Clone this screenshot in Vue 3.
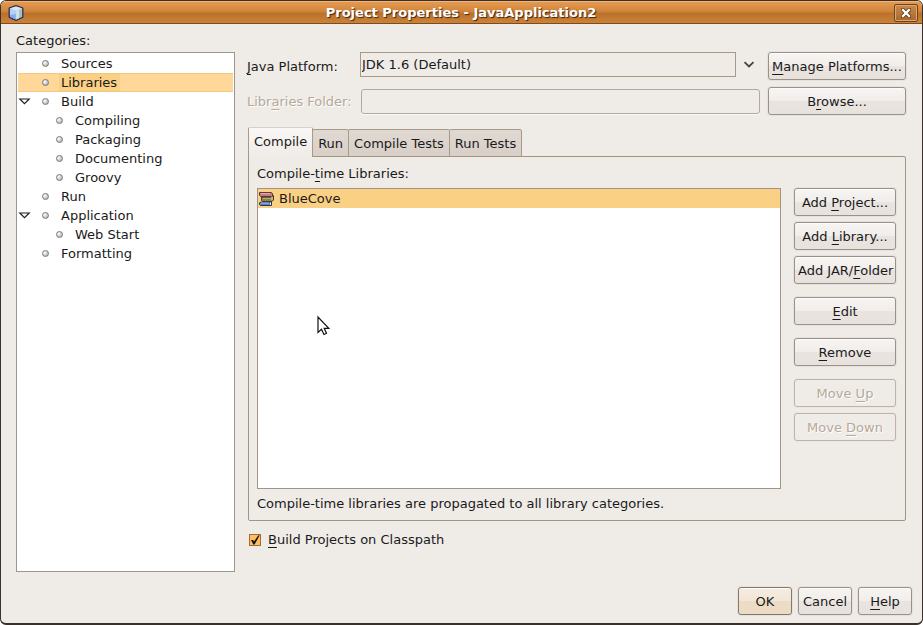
<script setup>
import { h, ref } from 'vue'

// Renders a caption; the letter after "_" is the keyboard mnemonic.
const Caption = ({ text }) => {
  const at = text.indexOf('_')
  if (at < 0) return h('span', text)
  return h('span', [text.slice(0, at), h('u', text[at + 1]), text.slice(at + 2)])
}
Caption.props = ['text']

const categories = [
  { name: 'Sources' },
  { name: 'Libraries', selected: true },
  { name: 'Build', open: true },
  { name: 'Compiling', child: true },
  { name: 'Packaging', child: true },
  { name: 'Documenting', child: true },
  { name: 'Groovy', child: true },
  { name: 'Run' },
  { name: 'Application', open: true },
  { name: 'Web Start', child: true },
  { name: 'Formatting' },
]

const tabs = ['Compile', 'Run', 'Compile Tests', 'Run Tests']
const activeTab = ref('Compile')
const buildOnClasspath = ref(true)

const actions = [
  { text: 'Add _Project...' },
  { text: 'Add _Library...' },
  { text: 'Add JAR/_Folder' },
  { text: '_Edit', gap: true },
  { text: '_Remove', gap: true },
  { text: 'Move _Up', gap: true, disabled: true },
  { text: 'Move _Down', disabled: true },
]
</script>

<template>
  <div class="window">
    <header class="titlebar">
      <svg class="logo" width="16" height="16" viewBox="0 0 16 16">
        <path d="M8 .7 14.800 3V12.200L8 15.300 1.200 12.200V3Z" fill="#c4d6e0" stroke="#26305c" stroke-width="1.300" stroke-linejoin="round" />
        <path d="M2 3.800 7.800 6V14.400L2 11.700Z" fill="#86abe6" />
        <path d="M2 3.800 7.800 6V9L2 10Z" fill="#b4d0f6" />
        <path d="M8.200 6 14 3.800V11.700L8.200 14.400Z" fill="#a9c0c4" />
        <path d="M8.200 6 11 5V13L8.200 14.400Z" fill="#d3e4e8" />
        <path d="M8 1.500 13.800 3.500 8 5.800 2.200 3.500Z" fill="#d9e6f0" />
      </svg>
      <h1>Project Properties - JavaApplication2</h1>
      <button class="close" type="button" aria-label="Close">
        <svg width="10" height="10" viewBox="0 0 10 10">
          <path d="M1.800 1.800 8.200 8.200M8.200 1.800 1.800 8.200" stroke="#5c300c" stroke-width="4" stroke-linecap="square" />
          <path d="M2 2 8 8M8 2 2 8" stroke="#fff" stroke-width="2.400" stroke-linecap="square" />
        </svg>
      </button>
    </header>

    <div class="body">
      <nav class="side">
        <span id="categories" class="side-label">Categories:</span>
        <ul class="tree" aria-labelledby="categories">
          <li v-for="c in categories" :key="c.name" :class="{ child: c.child, selected: c.selected }">
            <span class="handle">
              <svg v-if="c.open" width="13" height="7" viewBox="0 0 13 7">
                <path d="M1.800 1H11.200L6.500 5.700Z" fill="#fff" stroke="#222" stroke-width="1.200" />
              </svg>
            </span>
            <span class="bullet"></span>
            <span class="name">{{ c.name }}</span>
          </li>
        </ul>
      </nav>

      <main class="content">
        <div class="form">
          <label for="platform"><Caption text="_Java Platform:" /></label>
          <div class="combo">
            <select id="platform"><option>JDK 1.6 (Default)</option></select>
            <svg width="12" height="8" viewBox="0 0 12 8">
              <path d="M1.500 1.200 6 5.400 10.500 1.200" fill="none" stroke="#444" stroke-width="1.800" />
            </svg>
          </div>
          <button class="btn" type="button"><Caption text="_Manage Platforms..." /></button>

          <label class="off" for="folder"><Caption text="Libr_aries Folder:" /></label>
          <input id="folder" class="folder" type="text" disabled />
          <button class="btn" type="button"><Caption text="B_rowse..." /></button>
        </div>

        <div class="tabs" role="tablist">
          <button
            v-for="t in tabs"
            :key="t"
            type="button"
            role="tab"
            class="tab"
            :class="{ active: t === activeTab }"
            :aria-selected="t === activeTab"
            @click="activeTab = t"
          >{{ t }}</button>
        </div>

        <section class="panel">
          <span id="libs" class="libs-label"><Caption text="Compile-_time Libraries:" /></span>
          <div class="columns">
            <ul class="list" aria-labelledby="libs">
              <li>
                <svg width="17" height="16" viewBox="0 0 17 16">
                  <path d="M1.500 1.500H13L14.500 2.500V5.500H2.500L1.500 4.500Z" fill="#bf7f86" stroke="#6b3038" />
                  <path d="M3 2.500H12" stroke="#e0adb0" />
                  <path d="M3.500 6H14L15.500 4.500V9L14 10.500H4.500L3.500 9.500Z" fill="#8d8248" stroke="#47401f" />
                  <path d="M5 7.500H13" stroke="#b8ad70" />
                  <path d="M14 5.500V9" stroke="#eceae4" />
                  <path d="M2.500 11H13.500V14.500H2.500L1.500 13.500V12Z" fill="#6780b8" stroke="#25365f" />
                  <path d="M3 12H11" stroke="#a9bbe0" />
                  <path d="M12.500 11.500V14" stroke="#e8eaf0" />
                </svg>
                <span>BlueCove</span>
              </li>
            </ul>
            <div class="actions">
              <button
                v-for="a in actions"
                :key="a.text"
                type="button"
                class="btn"
                :class="{ gap: a.gap }"
                :disabled="a.disabled"
              ><Caption :text="a.text" /></button>
            </div>
          </div>
          <p class="note">Compile-time libraries are propagated to all library categories.</p>
        </section>

        <label class="check">
          <span class="box">
            <input v-model="buildOnClasspath" type="checkbox" />
            <svg v-if="buildOnClasspath" class="tick" width="12" height="12" viewBox="0 0 12 12">
              <path d="M2 6 4.300 6 5 7.600 9.400 1.200 10.600 1.600 5.600 10.400 4.300 10.400Z" fill="#1c1408" />
            </svg>
          </span>
          <Caption text="_Build Projects on Classpath" />
        </label>
      </main>
    </div>

    <footer class="footer">
      <button class="btn primary" type="button">OK</button>
      <button class="btn" type="button">Cancel</button>
      <button class="btn" type="button"><Caption text="_Help" /></button>
    </footer>

    <svg class="pointer" width="14" height="21" viewBox="0 0 14 21">
      <path d="M2 2V17.500L5.500 14.300 8 19.500 10.500 18.300 8.200 13.300H12.800Z" fill="#fff" stroke="#111" stroke-width="1.200" />
    </svg>
  </div>
</template>

<style>
body {
  margin: 0;
  background: #fff;
}
u {
  text-decoration: underline 1px;
  text-underline-offset: 3px;
  text-decoration-skip-ink: none;
}
</style>

<style scoped>
.window,
.window * {
  box-sizing: border-box;
}
.window {
  position: relative;
  display: flex;
  flex-direction: column;
  min-height: 100vh;
  border: 1px solid #3a302c;
  border-bottom-width: 2px;
  border-radius: 6px;
  overflow: hidden;
  background: #efebe7;
  color: #1a1a1a;
  font: 13px/19px "DejaVu Sans", sans-serif;
}
button,
input,
select {
  margin: 0;
  font: inherit;
  color: inherit;
}
.titlebar {
  display: flex;
  align-items: center;
  height: 23px;
  padding: 0 4px 0 7px;
  border-top: 1px solid #f4b478;
  border-bottom: 1px solid #7d4b1c;
  background: linear-gradient(#e39a50, #cf8339 48%, #b9712b 52%, #cc8238);
}
.titlebar h1 {
  flex: 1;
  margin: 0;
  padding-left: 4px;
  text-align: center;
  font-size: 13px;
  line-height: 19px;
  color: #fff;
  text-shadow: 1px 1px 1px #3d2410;
}
.close {
  display: flex;
  align-items: center;
  justify-content: center;
  width: 24px;
  height: 18px;
  padding: 0;
  border: 1px solid #6f4217;
  border-radius: 2px;
  background: linear-gradient(#c98a4c, #a7682b);
  box-shadow: inset 0 0 0 1px #dba873;
}
.body {
  flex: 1;
  display: flex;
  gap: 12px;
  padding: 7px 16px 0 15px;
}
.side {
  display: flex;
  flex-direction: column;
  width: 219px;
}
.side-label {
  height: 21px;
}
.tree,
.list {
  margin: 0;
  padding: 0;
  list-style: none;
  background: #fff;
}
.tree {
  flex: 1;
  padding: 1px;
  border: 1px solid #9c9690;
}
.tree li {
  display: flex;
  align-items: center;
  height: 19px;
}
.handle {
  display: flex;
  width: 24px;
}
.bullet {
  width: 7px;
  height: 7px;
  margin-right: 10px;
  border: 1px solid #777;
  border-radius: 50%;
  background: radial-gradient(circle at 30% 30%, #fff, #a4a4a4);
}
.child .handle {
  width: 38px;
}
.name {
  padding: 0 3px 0 2px;
}
.tree .selected {
  border-top: 1px solid #efc982;
  border-bottom: 1px solid #efc982;
  background: #ffd799;
}
.selected .name {
  line-height: 17px;
  background: #fad184;
}
.content {
  flex: 1;
  display: flex;
  flex-direction: column;
  min-width: 0;
}
.form {
  display: grid;
  grid-template-columns: 106px 1fr 138px;
  column-gap: 8px;
  row-gap: 7px;
  align-items: center;
  margin-top: 21px;
}
.form .off {
  color: #b5a99a;
  text-shadow: 1px 1px #fff;
}
.combo {
  display: flex;
  align-items: center;
  gap: 7px;
  margin: 0 0 3px -1px;
  padding-right: 5px;
}
.combo select {
  flex: 1;
  height: 25px;
  padding: 0 1px;
  border: 1px solid #a89a87;
  border-radius: 0;
  background: #efebe7;
  appearance: none;
}
.folder {
  width: 100%;
  height: 25px;
  border: 1px solid #b5a799;
  border-radius: 3px;
  background: #efebe7;
  box-shadow: 0 1px #f9f8f6;
}
.btn {
  height: 28px;
  padding: 0 3px;
  border: 1px solid #9a9189;
  border-radius: 3px;
  background: linear-gradient(#f7f5f3, #f0edea 50%, #e9e4e0 51%, #e8e2dd);
  box-shadow: 0 0 0 1px #e6e1dc, inset 0 1px #fcfbfa;
  white-space: nowrap;
}
.btn:disabled {
  border-color: #bfb3a8;
  background: #efebe7;
  box-shadow: 0 0 0 1px #ebe6e1;
  color: #b5a99a;
  text-shadow: 1px 1px #fff;
}
.btn.primary {
  border-color: #857868;
  background: linear-gradient(#f6ece0, #f2e5d5 50%, #ecdcc6 51%, #eddcc5);
}
.tabs {
  display: flex;
  align-items: flex-end;
  height: 30px;
  margin: 12px 0 -1px 1px;
}
.tab {
  height: 28px;
  padding: 0 5px;
  border: 1px solid #a89a8a;
  border-radius: 2px 2px 0 0;
  background: linear-gradient(#e0d9d2, #d8cfc7);
  white-space: nowrap;
}
.tab + .tab {
  margin-left: -1px;
}
.tab.active {
  z-index: 1;
  height: 30px;
  padding: 0 5px 3px;
  border-top-color: #d8d0c8;
  border-bottom: 0;
  background: linear-gradient(#faf8f6, #efebe7);
}
.panel {
  flex: 1;
  display: flex;
  flex-direction: column;
  margin-left: 1px;
  padding: 7px 9px 7px 8px;
  border: 1px solid #a39383;
  border-radius: 0 2px 2px 2px;
}
.libs-label {
  height: 24px;
}
.columns {
  flex: 1;
  display: flex;
  gap: 13px;
}
.list {
  flex: 1;
  border: 1px solid #a39383;
}
.list li {
  display: flex;
  align-items: center;
  gap: 4px;
  height: 19px;
  background: #fad184;
}
.actions {
  display: flex;
  flex-direction: column;
  gap: 6px;
  width: 102px;
}
.actions .gap {
  margin-top: 7px;
}
.note {
  margin: 5px 0 0;
}
.check {
  display: flex;
  align-items: center;
  gap: 7px;
  margin: 9px 0 23px 2px;
}
.box {
  position: relative;
  display: flex;
}
.box input {
  width: 12px;
  height: 12px;
  border: 1px solid #a06c2c;
  background: #fcbf68;
  appearance: none;
}
.tick {
  position: absolute;
  inset: 0;
  pointer-events: none;
}
.footer {
  display: flex;
  justify-content: flex-end;
  gap: 6px;
  padding: 15px 10px 8px;
}
.footer .btn {
  min-width: 54px;
}
.pointer {
  position: absolute;
  left: 315px;
  top: 314px;
}
</style>
